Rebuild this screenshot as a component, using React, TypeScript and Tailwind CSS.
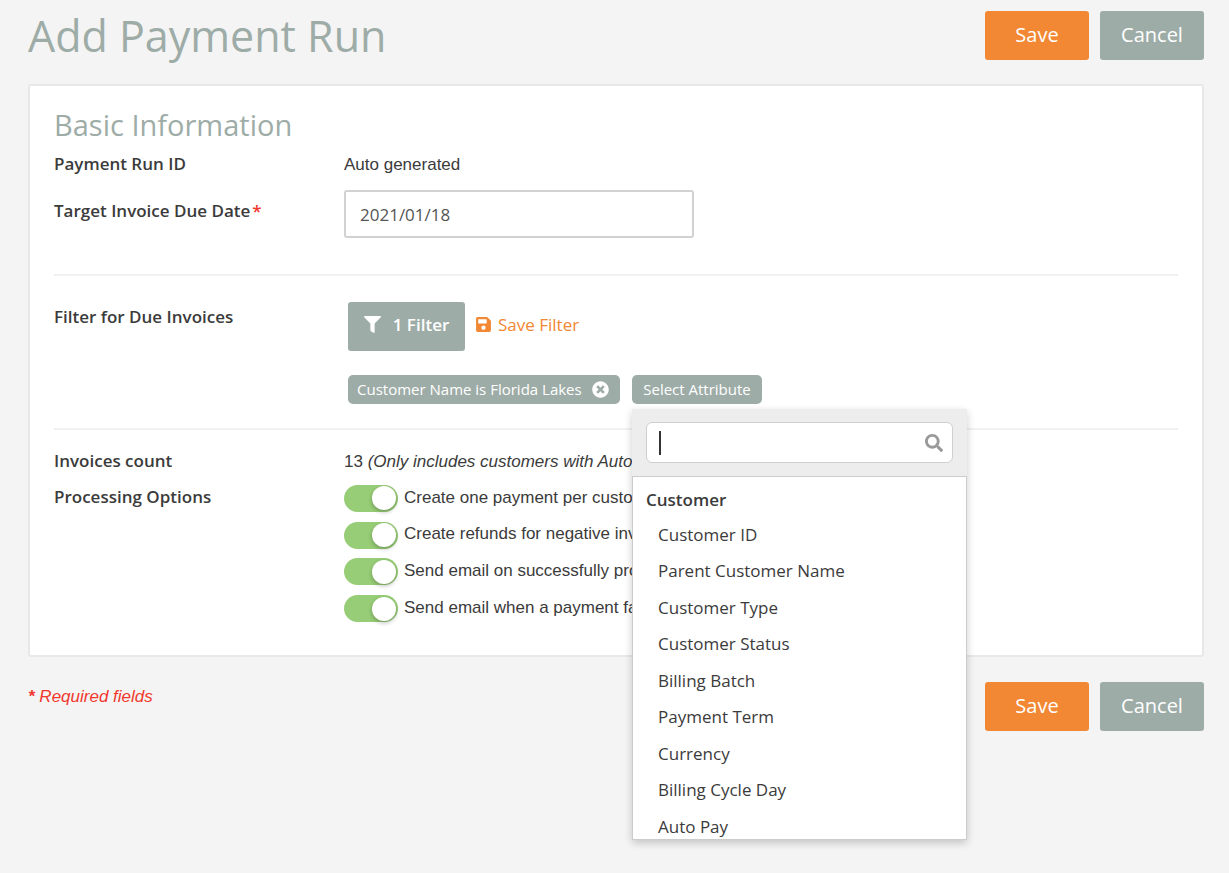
import { useState } from "react";
import type { ReactNode } from "react";
import { FaFilter, FaSave, FaSearch, FaTimesCircle } from "react-icons/fa";

const OPTIONS = [
  "Create one payment per customer",
  "Create refunds for negative invoices",
  "Send email on successfully processed",
  "Send email when a payment fails",
];

const CUSTOMER_ATTRIBUTES = [
  "Customer ID",
  "Parent Customer Name",
  "Customer Type",
  "Customer Status",
  "Billing Batch",
  "Payment Term",
  "Currency",
  "Billing Cycle Day",
  "Auto Pay",
];

function FormActions() {
  return (
    <div className="flex shrink-0 gap-[11px] text-xl text-white">
      <button type="button" className="h-[49px] w-26 rounded-[3px] bg-[#f28833] pb-0.5 font-medium">
        Save
      </button>
      <button type="button" className="h-[49px] w-26 rounded-[3px] bg-[#9eaca7] pb-0.5 font-medium">
        Cancel
      </button>
    </div>
  );
}

type RowProps = {
  label: ReactNode;
  labelClass?: string;
  children: ReactNode;
};

function Row({ label, labelClass = "leading-9", children }: RowProps) {
  return (
    <div className="flex">
      <div className={`w-[290px] shrink-0 text-[17px] font-semibold ${labelClass}`}>{label}</div>
      <div className="min-w-0 flex-1">{children}</div>
    </div>
  );
}

function AttributeMenu() {
  const [query, setQuery] = useState("");
  const items = CUSTOMER_ATTRIBUTES.filter((a) => a.toLowerCase().includes(query.toLowerCase()));

  return (
    <div className="absolute top-[34px] left-0 z-10 w-[335px] text-[#3b3b3b] shadow-[0_3px_8px_rgba(0,0,0,0.2)]">
      <div className="bg-[#ededed] px-3.5 py-[13px]">
        <div className="flex h-[41px] items-center rounded-md border border-[#cfcfcf] bg-white px-3">
          {query === "" && <span className="h-6 w-0.5 bg-[#333]" />}
          <input
            type="text"
            aria-label="Search attributes"
            value={query}
            onChange={(e) => setQuery(e.target.value)}
            className="h-full min-w-0 flex-1 text-base caret-transparent outline-none"
          />
          <FaSearch className="mr-[-3px] size-[18px] text-[#999]" />
        </div>
      </div>
      <div className="h-[364px] overflow-hidden border border-[#ccc] bg-white px-[13px]">
        <div className="pt-[7px] text-[17px] leading-8 font-semibold">Customer</div>
        <ul className="grid h-[329px] auto-rows-fr text-[17px]">
          {items.map((item) => (
            <li key={item} className="flex">
              <button type="button" className="w-full px-3 text-left">
                {item}
              </button>
            </li>
          ))}
        </ul>
      </div>
    </div>
  );
}

export default function App() {
  const [dueDate, setDueDate] = useState("2021/01/18");

  return (
    <main className="min-h-screen bg-[#f4f4f4] pt-[11px] pr-[25px] pl-7 font-['Open_Sans',sans-serif] text-[#3b3b3b]">
      <header className="flex items-start justify-between">
        <h1 className="text-[43px] leading-[49px] text-[#9eaca7]">Add Payment Run</h1>
        <FormActions />
      </header>

      <section className="mt-6 rounded-[3px] border-2 border-[#e8e8e8] bg-white px-6 pt-5 pb-[29px]">
        <h2 className="pb-0.5 text-[29px] leading-[38px] text-[#9eaca7]">Basic Information</h2>

        <Row label="Payment Run ID">
          <p className="h-9 font-['Liberation_Sans',sans-serif] text-[17px] leading-[38px]">Auto generated</p>
        </Row>

        <div className="mt-2 pb-9">
          <Row
            labelClass="leading-[42px]"
            label={
              <label htmlFor="due-date">
                Target Invoice Due Date<span className="ml-0.5 text-[#f0382e]">*</span>
              </label>
            }
          >
            <input
              id="due-date"
              type="text"
              value={dueDate}
              onChange={(e) => setDueDate(e.target.value)}
              className="block h-12 w-[350px] rounded-[3px] border-2 border-[#d2d2d2] px-3.5 text-[17px] text-[#555]"
            />
          </Row>
        </div>

        {/* filters */}
        <div className="border-t-2 border-[#f1f1f1] pt-[26px] pb-6">
          <Row label="Filter for Due Invoices" labelClass="leading-[30px]">
            <div className="ml-1 flex items-center gap-2.5">
              <button
                type="button"
                className="flex h-[49px] w-[117px] items-center justify-center gap-3 rounded-[3px] bg-[#9eaca7] pb-1 text-[17px] font-semibold text-white"
              >
                <FaFilter className="size-[17px]" />1 Filter
              </button>
              <button
                type="button"
                className="flex items-center gap-1.5 pb-1 text-[17px] font-medium text-[#f28833]"
              >
                <FaSave className="size-[17px]" />
                Save Filter
              </button>
            </div>
            <div className="mt-6 ml-1 flex gap-3 text-[15px] text-white">
              <span className="flex h-[29px] w-[272px] items-center justify-between rounded-[5px] bg-[#9eaca7] pr-[11px] pl-[9px]">
                Customer Name is Florida Lakes
                <button type="button" aria-label="Remove filter">
                  <FaTimesCircle className="size-[17px]" />
                </button>
              </span>
              <div className="relative">
                <button type="button" className="h-[29px] w-[130px] rounded-[5px] bg-[#9eaca7]">
                  Select Attribute
                </button>
                <AttributeMenu />
              </div>
            </div>
          </Row>
        </div>

        <div className="border-t-2 border-[#f1f1f1] pt-[13px]">
          <Row label="Invoices count">
            <p className="h-9 font-['Liberation_Sans',sans-serif] text-[17px] leading-[38px]">
              13 <em>(Only includes customers with Auto Pay)</em>
            </p>
          </Row>
          <Row label="Processing Options">
            <div className="grid h-[147px] auto-rows-fr font-['Liberation_Sans',sans-serif] text-[17px]">
              {OPTIONS.map((option) => (
                <label key={option} className="flex items-center gap-1.5">
                  <input
                    type="checkbox"
                    defaultChecked
                    className="mt-0.5 flex h-[27px] w-[54px] appearance-none items-center rounded-full bg-[#ccc] px-0.5 before:size-6 before:rounded-full before:bg-white before:shadow-[0_2px_4px_rgba(0,0,0,0.25)] checked:justify-end checked:bg-[#97cd76]"
                  />
                  {option}
                </label>
              ))}
            </div>
          </Row>
        </div>
      </section>

      <footer className="mt-[25px] flex items-start justify-between">
        <p className="font-['Liberation_Sans',sans-serif] text-[17px] leading-[30px] text-[#f0382e] italic">
          <b>*</b> Required fields
        </p>
        <FormActions />
      </footer>
    </main>
  );
}
